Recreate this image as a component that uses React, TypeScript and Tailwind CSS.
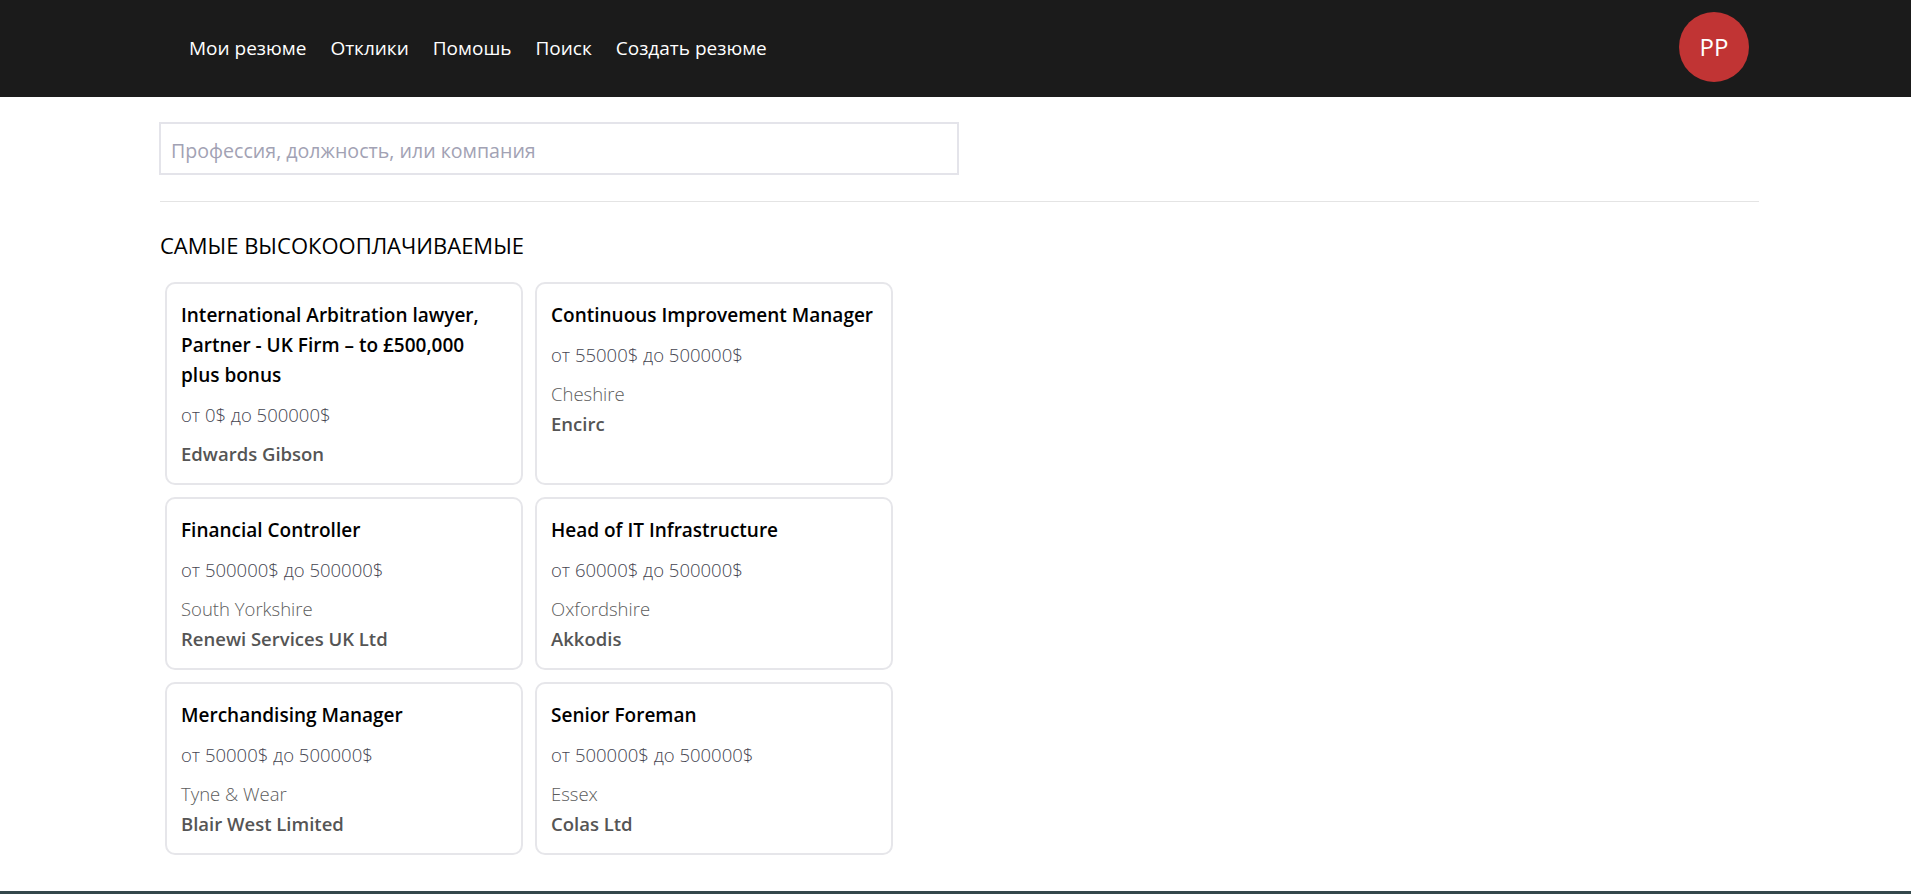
const jobs = [
  {
    title: "International Arbitration lawyer, Partner - UK Firm – to £500,000 plus bonus",
    salary: "от 0$ до 500000$",
    location: "",
    company: "Edwards Gibson",
  },
  {
    title: "Continuous Improvement Manager",
    salary: "от 55000$ до 500000$",
    location: "Cheshire",
    company: "Encirc",
  },
  {
    title: "Financial Controller",
    salary: "от 500000$ до 500000$",
    location: "South Yorkshire",
    company: "Renewi Services UK Ltd",
  },
  {
    title: "Head of IT Infrastructure",
    salary: "от 60000$ до 500000$",
    location: "Oxfordshire",
    company: "Akkodis",
  },
  {
    title: "Merchandising Manager",
    salary: "от 50000$ до 500000$",
    location: "Tyne & Wear",
    company: "Blair West Limited",
  },
  {
    title: "Senior Foreman",
    salary: "от 500000$ до 500000$",
    location: "Essex",
    company: "Colas Ltd",
  },
]

const navLinks = ["Мои резюме", "Отклики", "Помошь", "Поиск", "Создать резюме"]

const JobCard = ({ job }: { job: (typeof jobs)[number] }) => {
  return (
    <div className="rounded-[10px] border-2 border-[#e6e6ea] bg-white px-[14px] pt-[16px] pb-[14px]">
      <h3 className="mb-[10px] text-[19px] leading-[30px] font-semibold text-black">{job.title}</h3>
      <p className="mb-[9px] text-[18.5px] leading-[30px] font-light text-[#454550]">{job.salary}</p>
      <div className="text-[18.5px] leading-[30px]">
        {job.location && <p className="font-light text-[#5c5c5c]">{job.location}</p>}
        <p className="font-semibold text-[#555]">{job.company}</p>
      </div>
    </div>
  )
}

export default function App() {
  return (
    <div className="min-h-screen bg-white font-['Open_Sans',sans-serif]">
      <header className="h-[97px] bg-[#1b1b1b]">
        <div className="ml-[160px] mr-[152px] flex h-full items-center justify-between">
          <nav className="ml-[29px] flex gap-[24px] text-[19px] text-white">
            {navLinks.map((link) => (
              <a key={link} href="#" className="whitespace-nowrap">
                {link}
              </a>
            ))}
          </nav>
          <div className="mr-[10px] mb-[4px] flex h-[70px] w-[70px] items-center justify-center rounded-full bg-[#c13434] text-[24px] text-white">
            PP
          </div>
        </div>
      </header>

      <main className="ml-[160px] mr-[152px] pb-[36px]">
        <div className="pt-[25px]">
          <input
            type="text"
            placeholder="Профессия, должность, или компания"
            className="-ml-px h-[53px] w-[800px] border-2 border-[#e4e4ea] px-[10px] pt-[4px] text-[19.6px] outline-none placeholder:text-[#a2a2b4]"
          />
        </div>
        <hr className="mt-[26px] border-t border-[#e4e4e4]" />

        <h2 className="mt-[29px] text-[22px] leading-[28px] font-medium text-black">САМЫЕ ВЫСОКООПЛАЧИВАЕМЫЕ</h2>

        <div className="mt-[23px] ml-[5px] grid w-[728px] grid-cols-2 gap-3">
          {jobs.map((job) => (
            <JobCard key={job.title} job={job} />
          ))}
        </div>
      </main>

      <footer className="h-[200px] bg-[#34474b]" />
    </div>
  )
}
